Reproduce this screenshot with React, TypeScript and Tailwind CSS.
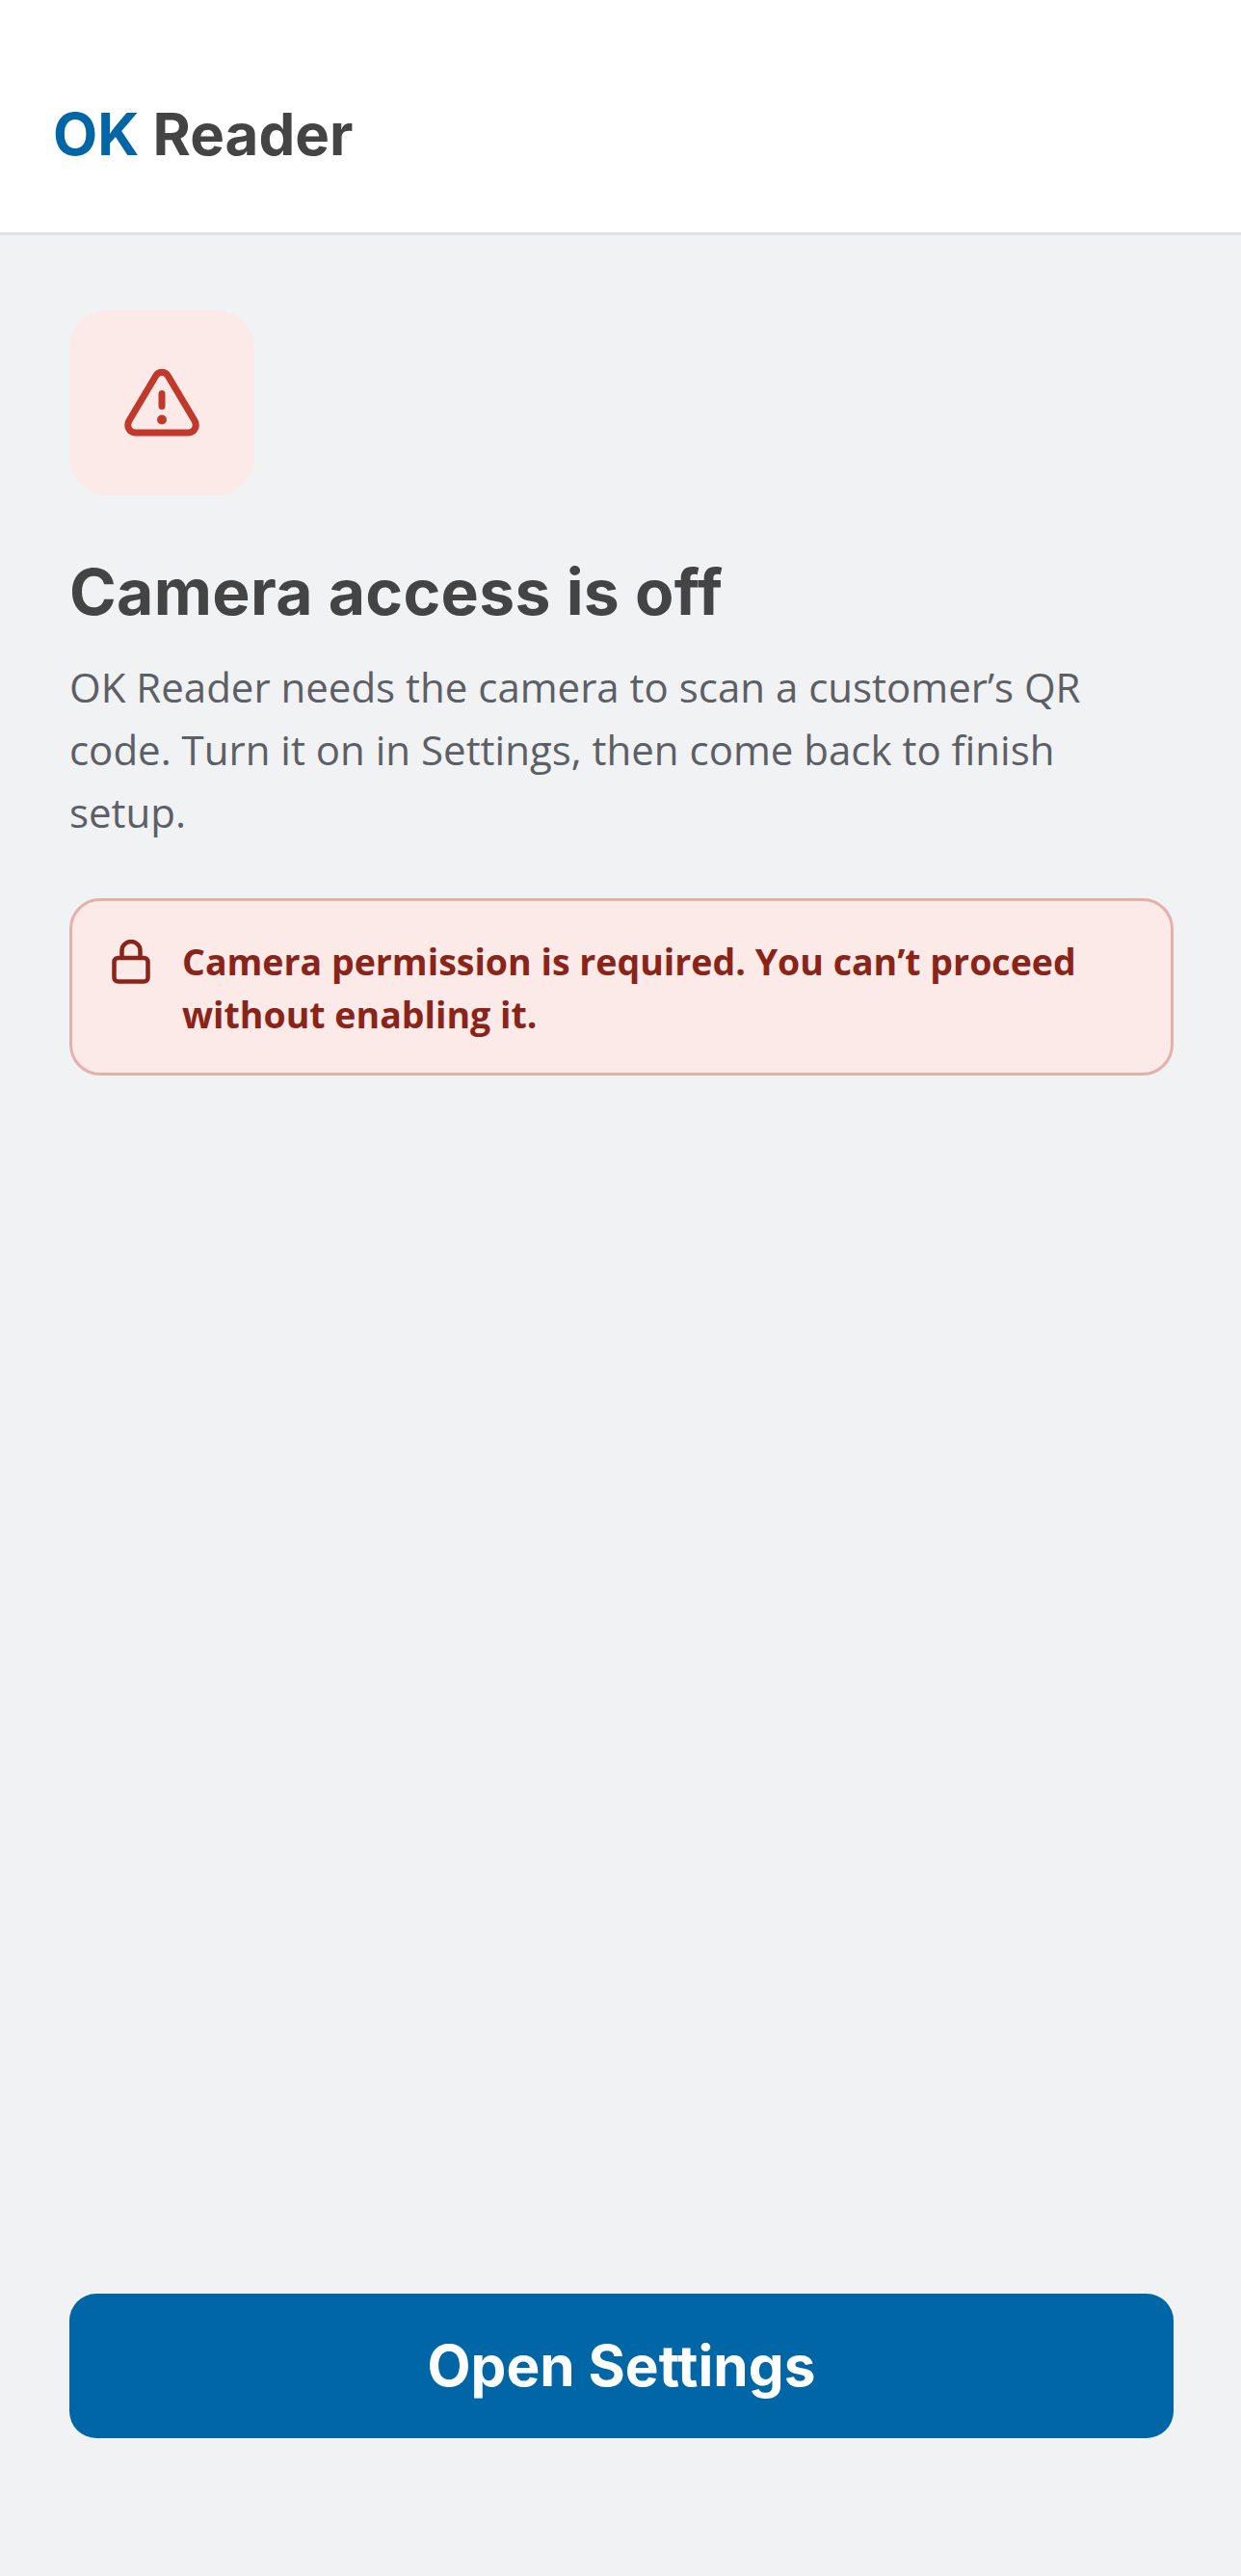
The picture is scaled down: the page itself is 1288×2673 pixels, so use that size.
const heading = { fontFamily: '"Inter", "Noto Sans", sans-serif' }

function WarningIcon() {
  return (
    <svg width="80" height="72" viewBox="0 0 80 72" fill="none" stroke="#c0392b" strokeWidth="7" strokeLinecap="round" strokeLinejoin="round">
      <path d="M34 7.500 6 54.500C3 60 6 67 12.500 67h55c6.500 0 9.500-7 6.500-12.500L46 7.500c-2.800-4.500-9.200-4.500-12 0Z" />
      <path d="M40 26.500v13" />
      <circle cx="40" cy="53.500" r="5" fill="#c0392b" stroke="none" />
    </svg>
  )
}

function LockIcon() {
  return (
    <svg width="40" height="46" viewBox="0 0 40 46" fill="none" stroke="#8a2318" strokeWidth="4.500" strokeLinecap="round" strokeLinejoin="round" className="mt-[5px] shrink-0">
      <rect x="2.500" y="19" width="35" height="24.500" rx="4" />
      <path d="M10.500 19v-7.500a9.500 9.500 0 0 1 19 0V19" />
    </svg>
  )
}

export default function App() {
  return (
    <div className="flex flex-col h-[2673px] bg-[#f1f2f4]" style={{ fontFamily: '"Open Sans", sans-serif' }}>
      <header className="flex items-center h-[244px] pl-[55px] pt-[37px] bg-white border-b-[3px] border-[#dfe1e5]">
        <div className="text-[60px] font-bold" style={heading}>
          <span className="text-[#0066a6]">OK</span> <span className="text-[#444444]">Reader</span>
        </div>
      </header>

      <main className="flex flex-col flex-1 pl-[72px] pr-[70px] pt-[78px] pb-[143px]">
        <div className="flex items-center justify-center w-[192px] h-[192px] rounded-[40px] bg-[#fbeae8]">
          <WarningIcon />
        </div>
        <h1 className="mt-[62px] text-[66px] leading-[76px] font-bold tracking-[0.3px] text-[#444444]" style={heading}>
          Camera access is off
        </h1>
        <p className="mt-[28px] text-[42px] leading-[65px] text-[#5c5f66]">
          OK Reader needs the camera to scan a customer’s QR code. Turn it on in Settings, then come back to finish setup.
        </p>
        <div className="flex gap-[33px] mt-[57px] pl-[41px] pr-[43px] pt-[35px] pb-[33px] rounded-[32px] border-[3px] border-[#e3b1aa] bg-[#fbeae8]">
          <LockIcon />
          <p className="text-[37.500px] leading-[55px] font-bold text-[#8a2318]">
            Camera permission is required. You can’t proceed without enabling it.
          </p>
        </div>
        <button className="mt-auto h-[150px] w-full rounded-[28px] bg-[#0066a6] text-[58.500px] font-bold text-white" style={heading}>
          Open Settings
        </button>
      </main>
    </div>
  )
}
